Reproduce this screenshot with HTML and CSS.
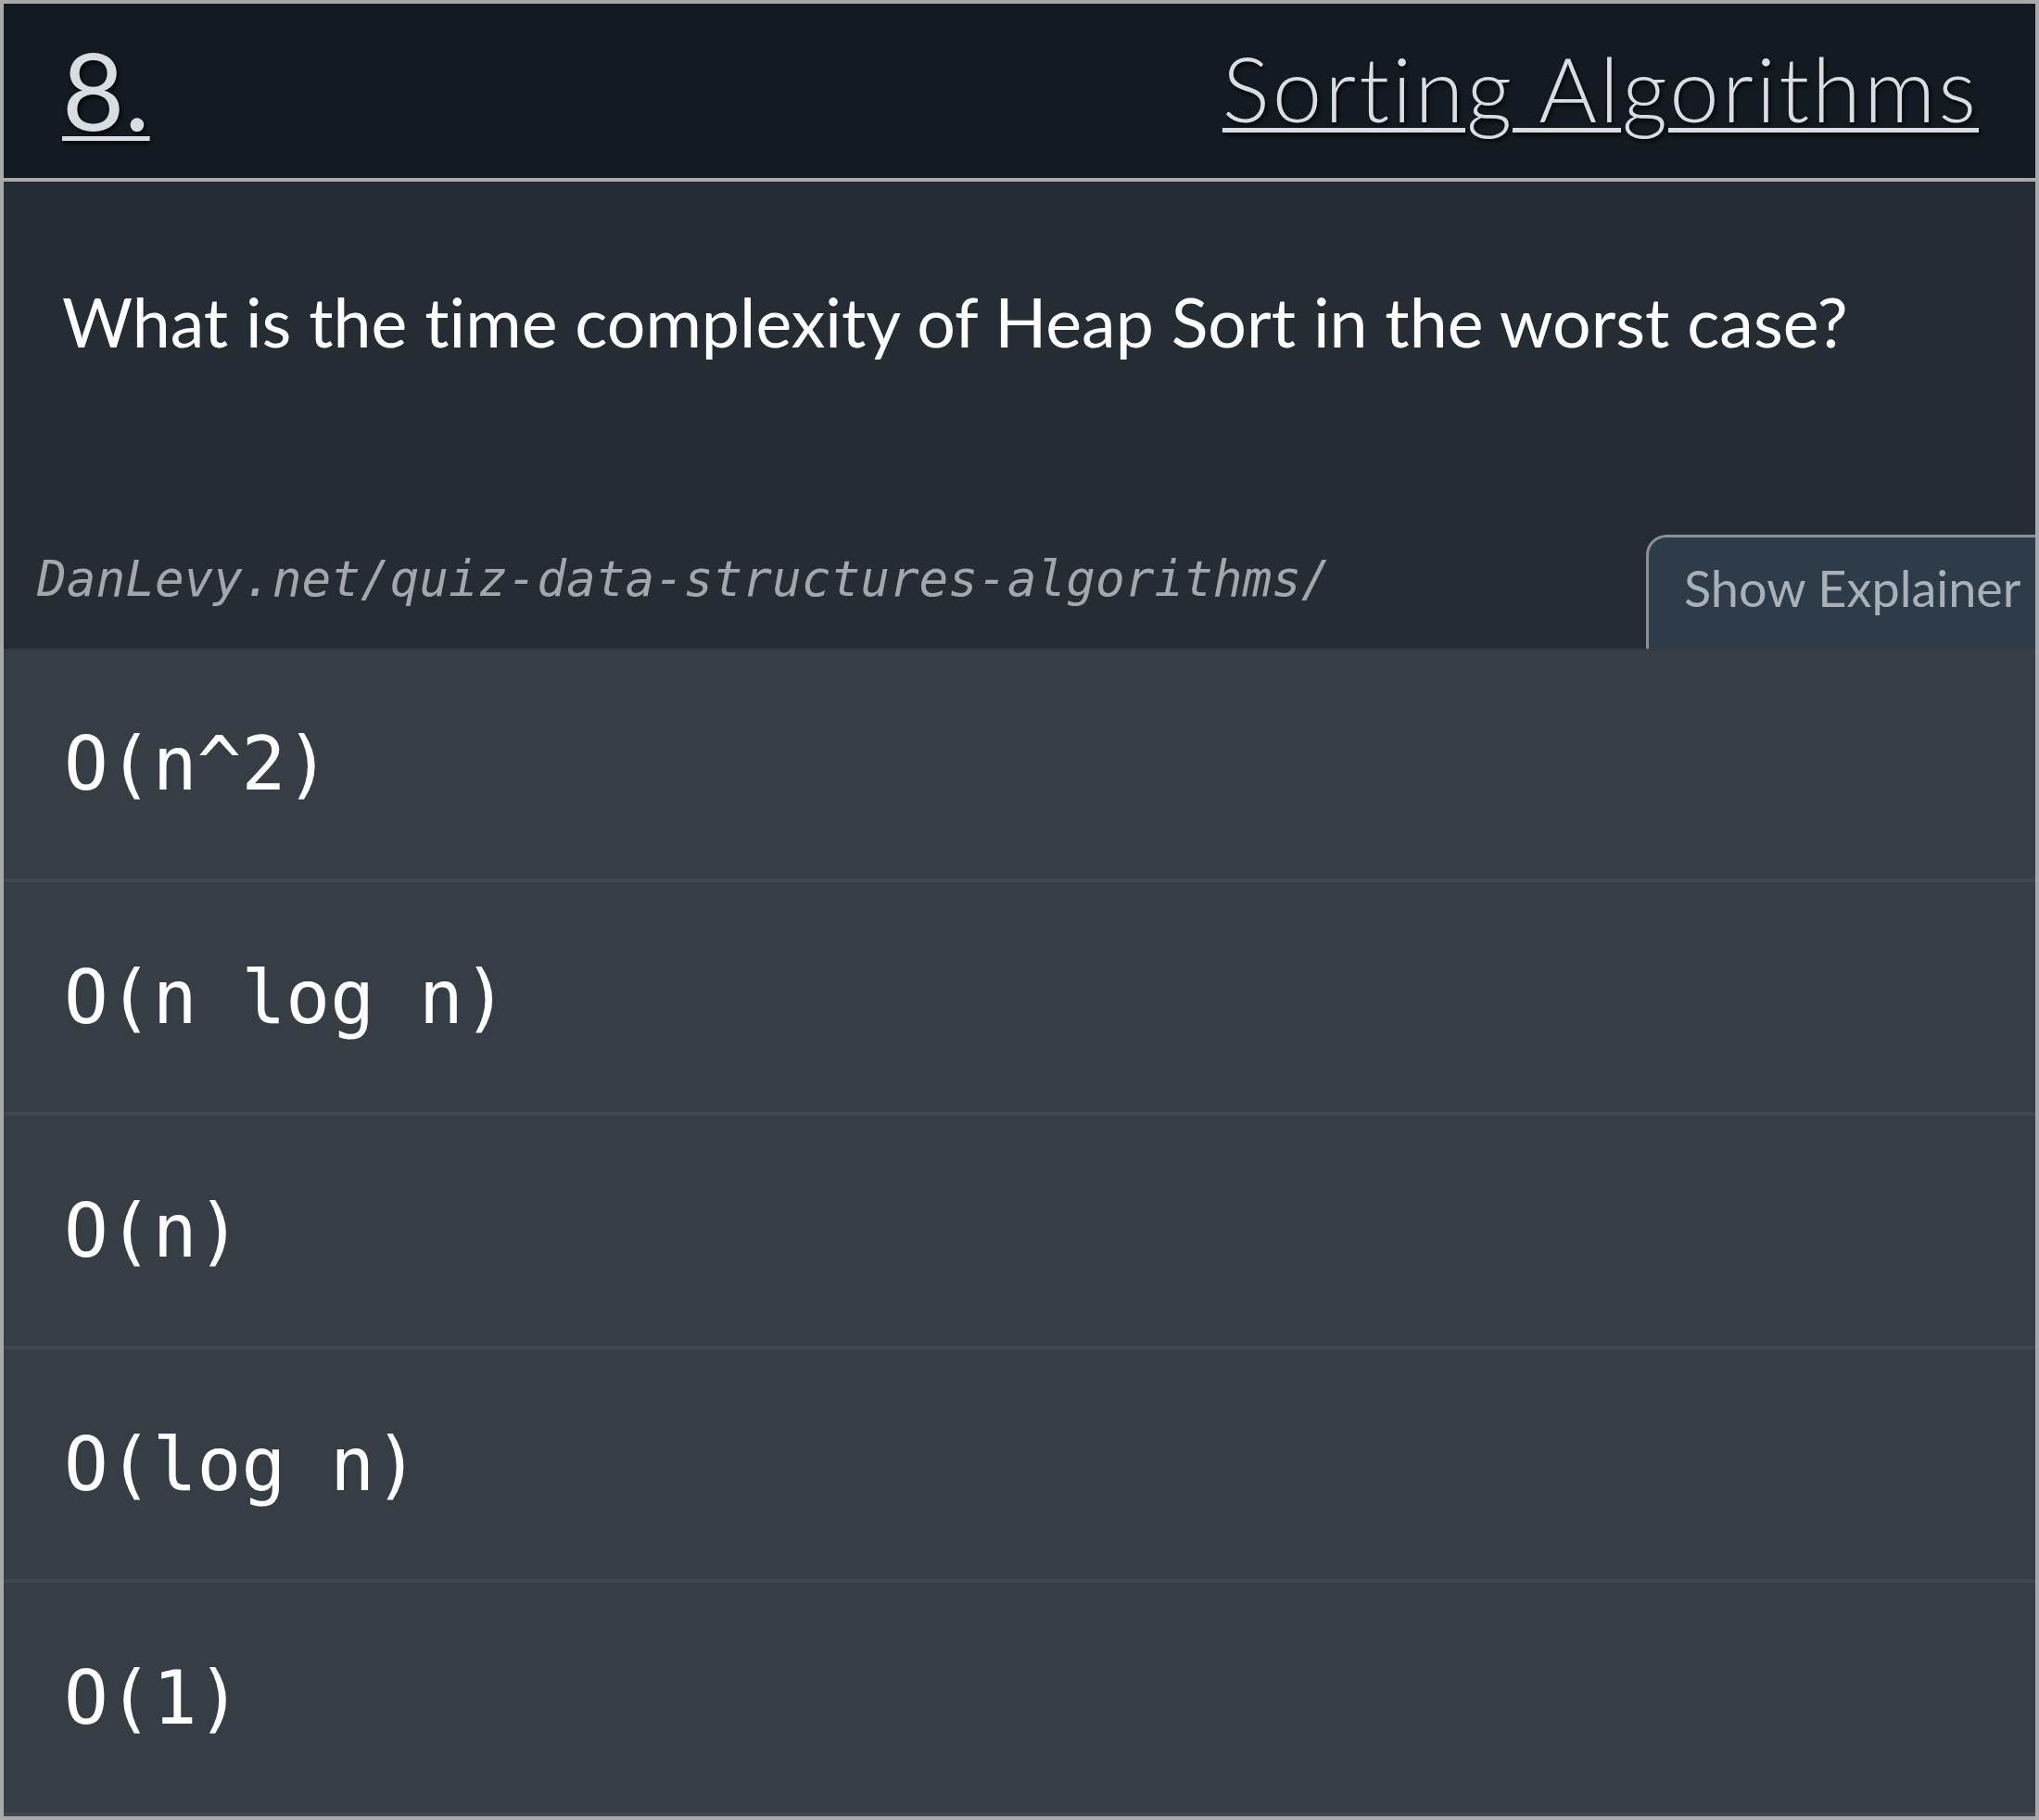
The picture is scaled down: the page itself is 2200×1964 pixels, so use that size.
FILE: index.html
```html
<!DOCTYPE html>
<html lang="en">
<head>
<meta charset="utf-8">
<title>Quiz 8 - Sorting Algorithms</title>
<link rel="stylesheet" href="styles.css">
</head>
<body>
<main class="card">
  <header class="head">
    <a class="num" href="#">8.</a>
    <a class="topic" href="#">Sorting Algorithms</a>
  </header>
  <section class="question">
    <p class="q">What is the time complexity of Heap Sort in the worst case?</p>
    <div class="meta">
      <span class="url">DanLevy.net/quiz-data-structures-algorithms/</span>
      <button class="explain" type="button">Show Explainer</button>
    </div>
  </section>
  <ul class="options">
    <li class="opt">O(n^2)</li>
    <li class="opt">O(n log n)</li>
    <li class="opt">O(n)</li>
    <li class="opt">O(log n)</li>
    <li class="opt">O(1)</li>
  </ul>
</main>
</body>
</html>
```
FILE: styles.css
```css
* { box-sizing: border-box; }
html, body { margin: 0; padding: 0; background: #a9a9a9; }
.card {
  width: 2200px;
  height: 1964px;
  border: 4px solid #a9a9a9;
  background: #262c33;
  overflow: hidden;
  display: flex;
  flex-direction: column;
  font-variant-ligatures: none;
}
.head {
  height: 192px;
  flex: none;
  background: #131a21;
  border-bottom: 4px solid #a9a9a9;
  display: flex;
  justify-content: space-between;
  align-items: flex-start;
  padding: 0 61px 0 63px;
}
.num, .topic {
  font-family: Lato, "Open Sans", sans-serif;
  color: #d9dce0;
  text-decoration: underline;
  text-decoration-thickness: 5px;
  text-underline-offset: 6px;
  line-height: 1;
  text-shadow: 2px 3px 4px rgba(0,0,0,0.8);
  font-variant-ligatures: none;
}
.num {
  font-size: 116px;
  font-weight: 400;
  margin-top: 35px;
}
.topic {
  font-size: 96px;
  font-weight: 300;
  letter-spacing: 3px;
  margin-top: 43px;
}
.question {
  height: 504px;
  flex: none;
  display: flex;
  flex-direction: column;
}
.q {
  margin: 0;
  padding: 114px 0 0 63px;
  font-family: Lato, "Open Sans", sans-serif;
  font-size: 73.5px;
  line-height: 1;
  color: #ffffff;
  font-weight: 400;
}
.meta {
  margin-top: auto;
  display: flex;
  align-items: flex-end;
  justify-content: space-between;
  height: 123px;
}
.url {
  font-family: "DejaVu Sans Mono", monospace;
  font-style: italic;
  font-size: 52.7px;
  line-height: 1;
  color: #a3a7ac;
  padding-left: 36px;
  align-self: flex-start;
  margin-top: 22px;
}
.explain {
  width: 470px;
  height: 123px;
  margin-right: -50px;
  background: #2e3c4a;
  border: 3px solid #8a9095;
  border-bottom: none;
  border-radius: 22px 0 0 0;
  color: #a9b0b7;
  font-family: Lato, "Open Sans", sans-serif;
  font-size: 54px;
  text-align: left;
  padding: 0 0 12px 38px;
}
.options {
  list-style: none;
  margin: 0;
  padding: 0;
  flex: none;
}
.opt {
  height: 252px;
  background: #373d45;
  border-bottom: 4px solid #41474f;
  display: flex;
  align-items: center;
  padding-left: 65px;
  font-family: "DejaVu Sans Mono", monospace;
  font-size: 79.5px;
  color: #ffffff;
}
```
